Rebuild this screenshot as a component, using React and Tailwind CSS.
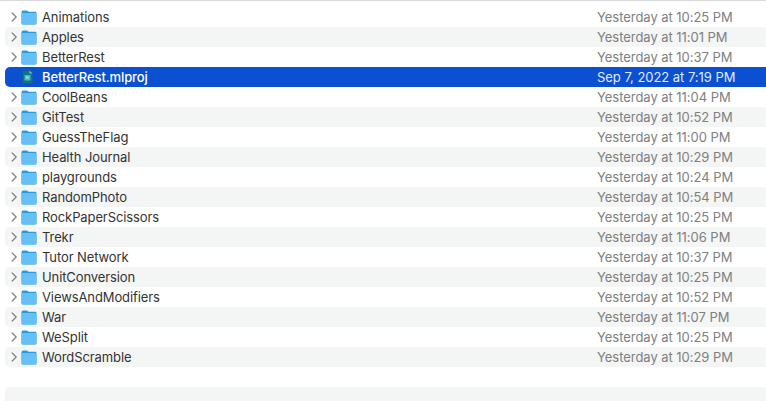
const rows = [
  ["Animations", "Yesterday at 10:25 PM"],
  ["Apples", "Yesterday at 11:01 PM"],
  ["BetterRest", "Yesterday at 10:37 PM"],
  ["BetterRest.mlproj", "Sep 7, 2022 at 7:19 PM", true],
  ["CoolBeans", "Yesterday at 11:04 PM"],
  ["GitTest", "Yesterday at 10:52 PM"],
  ["GuessTheFlag", "Yesterday at 11:00 PM"],
  ["Health Journal", "Yesterday at 10:29 PM"],
  ["playgrounds", "Yesterday at 10:24 PM"],
  ["RandomPhoto", "Yesterday at 10:54 PM"],
  ["RockPaperScissors", "Yesterday at 10:25 PM"],
  ["Trekr", "Yesterday at 11:06 PM"],
  ["Tutor Network", "Yesterday at 10:37 PM"],
  ["UnitConversion", "Yesterday at 10:25 PM"],
  ["ViewsAndModifiers", "Yesterday at 10:52 PM"],
  ["War", "Yesterday at 11:07 PM"],
  ["WeSplit", "Yesterday at 10:25 PM"],
  ["WordScramble", "Yesterday at 10:29 PM"],
];

function Folder() {
  return (
    <svg width="16" height="15" viewBox="0 0 16 15" className="shrink-0 mt-px">
      <path d="M0.5 2 Q0.5 0.5 2 0.5 H5.5 Q6.5 0.5 7 1.2 L7.5 1.8 H14 Q15.5 1.8 15.5 3.2 V13 Q15.5 14.5 14 14.5 H2 Q0.5 14.5 0.5 13 Z" fill="#2a9bdc" />
      <path d="M0.5 4 Q0.5 3 1.6 3 H14.4 Q15.5 3 15.5 4 V13 Q15.5 14.5 14 14.5 H2 Q0.5 14.5 0.5 13 Z" fill="#66c0f6" />
    </svg>
  );
}

function FileIcon() {
  return (
    <svg width="11" height="14" viewBox="0 0 11 14" className="shrink-0">
      <path d="M0.5 1.5 Q0.5 0.5 1.5 0.5 H7.5 L10.5 3.5 V12.5 Q10.5 13.5 9.5 13.5 H1.5 Q0.5 13.5 0.5 12.5 Z" fill="#0f7480" />
      <path d="M7.5 0.5 L10.5 3.5 H7.5 Z" fill="#6fc6bb" />
      <rect x="2.5" y="5" width="6" height="5.5" rx="0.6" fill="#4fb6c2" />
      <path d="M4 7.8 H7 M4 7.8 L5.4 6.6" stroke="#dff5f4" strokeWidth="0.7" fill="none" />
    </svg>
  );
}

function Chevron() {
  return (
    <svg width="7" height="10" viewBox="0 0 7 10" className="shrink-0">
      <path d="M1.2 1 L5.2 5 L1.2 9" stroke="#808080" strokeWidth="1.2" fill="none" strokeLinecap="round" strokeLinejoin="round" />
    </svg>
  );
}

function Row({ name, date, selected, striped }) {
  const bg = selected ? "bg-[#0a50d0] rounded-l-[5px]" : striped ? "bg-[#f4f5f5] rounded-l-[5px]" : "";
  return (
    <div className={`h-5 ml-[5px] flex items-center text-[13px] leading-5 ${bg}`}>
      <div className="w-[37px] h-full flex items-center pl-[6px] gap-[3px] shrink-0">
        {selected ? (
          <div className="pl-[11px]"><FileIcon /></div>
        ) : (
          <>
            <Chevron />
            <Folder />
          </>
        )}
      </div>
      <div className={`w-[555px] shrink-0 tracking-[-0.1px] ${selected ? "text-white font-medium" : "text-[#333333]"}`}>{name}</div>
      <div className={`tracking-[-0.04px] ${selected ? "text-[#e3ebfb]" : "text-[#808080]"}`}>{date}</div>
    </div>
  );
}

export default function App() {
  return (
    <div className="w-[766px] h-[401px] overflow-hidden bg-white font-['Inter',sans-serif]">
      <div className="h-[7px] border-t border-[#d9d9d9]" />
      {rows.map(([name, date, selected], i) => (
        <Row key={name} name={name} date={date} selected={selected} striped={i % 2 === 1} />
      ))}
      <div className="h-5" />
      <div className="h-5 ml-[5px] bg-[#f4f5f5] rounded-l-[5px]" />
    </div>
  );
}
